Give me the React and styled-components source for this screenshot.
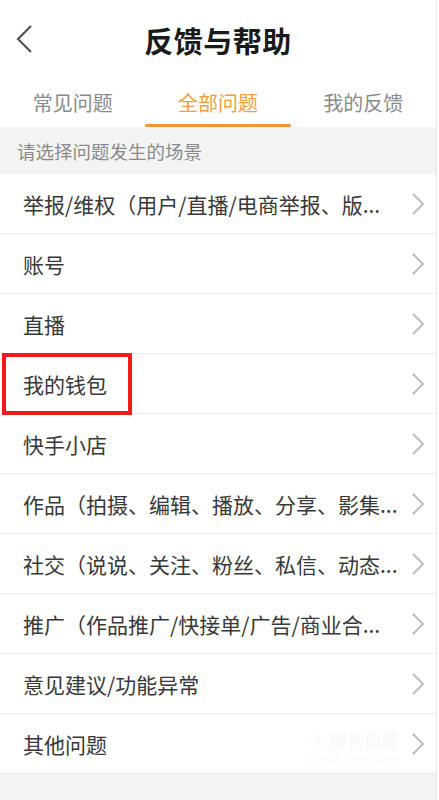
import React from 'react';
import styled, { createGlobalStyle } from 'styled-components';

const GlobalStyle = createGlobalStyle`
  html, body {
    margin: 0;
    padding: 0;
    background: #ffffff;
    font-family: "Noto Sans CJK SC", "Noto Sans", sans-serif;
  }
`;

const Page = styled.div`
  width: 436px;
  min-height: 800px;
  background: #f4f4f4;
  border-right: 1px solid #e6e6e6;
  position: relative;
`;

const Header = styled.div`
  height: 82px;
  display: flex;
  align-items: center;
  justify-content: center;
  position: relative;
  background: #fff;
`;

const BackButton = styled.div`
  position: absolute;
  left: 14px;
  top: 22px;
  width: 24px;
  height: 34px;
  display: flex;
  align-items: center;
`;

const Title = styled.div`
  font-size: 29px;
  font-weight: 700;
  color: #1a1a1a;
  letter-spacing: 0.5px;
  margin-top: -2px;
`;

const Tabs = styled.div`
  display: grid;
  grid-template-columns: repeat(3, 1fr);
  height: 45px;
  background: #fff;
`;

const Tab = styled.div`
  display: flex;
  justify-content: center;
  align-items: flex-start;
  padding-top: 6px;
  font-size: 20px;
  color: ${p => (p.active ? '#f2a03d' : '#8a8a8a')};
  position: relative;
  &::after {
    content: '';
    display: ${p => (p.active ? 'block' : 'none')};
    position: absolute;
    bottom: 0;
    left: 0;
    right: 0;
    height: 3px;
    border-radius: 2px;
    background: #f0973a;
  }
`;

const SectionHead = styled.div`
  height: 47px;
  display: flex;
  align-items: center;
  padding-left: 17px;
  font-size: 18.5px;
  color: #8a8a8a;
  background: #f4f4f4;
`;

const List = styled.div`
  background: #fff;
`;

const Row = styled.div`
  height: 59px;
  border-bottom: 1px solid #ededed;
  display: flex;
  align-items: center;
  padding: 0 10px 0 23px;
  position: relative;
`;

const RowText = styled.div`
  flex: 1;
  font-size: 21px;
  color: #383838;
  white-space: nowrap;
  overflow: hidden;
`;

const Chevron = styled.svg`
  flex: none;
  width: 16px;
  height: 24px;
`;

const Highlight = styled.div`
  position: absolute;
  left: 2px;
  top: -1px;
  width: 122px;
  height: 54px;
  border: 4px solid #ee1c1c;
`;

const Watermark = styled.div`
  position: absolute;
  right: 36px;
  top: 731px;
  color: rgba(190, 190, 190, 0.14);
  font-size: 17px;
  line-height: 18px;
  text-align: center;
  pointer-events: none;
  small {
    display: block;
    font-size: 9px;
    letter-spacing: 1px;
  }
`;

const items = [
  '举报/维权（用户/直播/电商举报、版...',
  '账号',
  '直播',
  '我的钱包',
  '快手小店',
  '作品（拍摄、编辑、播放、分享、影集...',
  '社交（说说、关注、粉丝、私信、动态...',
  '推广（作品推广/快接单/广告/商业合...',
  '意见建议/功能异常',
  '其他问题',
];

function App() {
  return (
    <Page>
      <GlobalStyle />
      <Header>
        <BackButton>
          <svg width="20" height="30" viewBox="0 0 20 30">
            <polyline points="17,2 4,15 17,28" fill="none" stroke="#555" strokeWidth="2.2" />
          </svg>
        </BackButton>
        <Title>反馈与帮助</Title>
      </Header>
      <Tabs>
        <Tab>常见问题</Tab>
        <Tab active>全部问题</Tab>
        <Tab>我的反馈</Tab>
      </Tabs>
      <SectionHead>请选择问题发生的场景</SectionHead>
      <List>
        {items.map((t, i) => (
          <Row key={i}>
            <RowText>{t}</RowText>
            <Chevron viewBox="0 0 16 24">
              <polyline points="3,2 13,12 3,22" fill="none" stroke="#bdbdbd" strokeWidth="2" />
            </Chevron>
            {t === '我的钱包' ? <Highlight /> : null}
          </Row>
        ))}
      </List>
      <Watermark>
        ⓢ 搜狗指南
        <small>zhinan.sogou.com</small>
      </Watermark>
    </Page>
  );
}

export default App;
